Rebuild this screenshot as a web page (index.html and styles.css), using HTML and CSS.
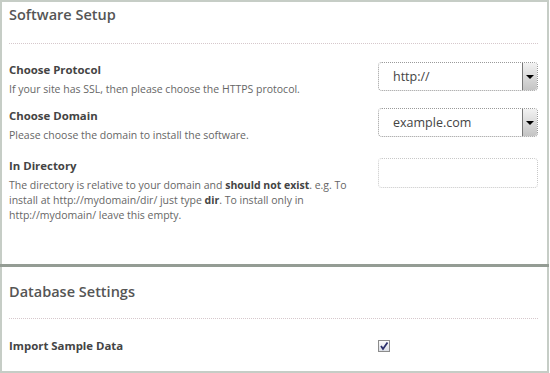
FILE: index.html
```html
<!DOCTYPE html>
<html lang="en">
<head>
  <meta charset="UTF-8" />
  <title>Software Setup</title>
  <link rel="stylesheet" href="styles.css">
</head>
<body>
  <div class="panel">
    <div class="section">
      <h2 class="title">Software Setup</h2>

      <div class="row">
        <div class="info">
          <div class="label">Choose Protocol</div>
          <div class="desc">If your site has SSL, then please choose the HTTPS protocol.</div>
        </div>
        <div class="control">
          <div class="select">
            <span class="value">http://</span>
            <span class="arrow"></span>
          </div>
        </div>
      </div>

      <div class="row">
        <div class="info">
          <div class="label">Choose Domain</div>
          <div class="desc">Please choose the domain to install the software.</div>
        </div>
        <div class="control">
          <div class="select">
            <span class="value">example.com</span>
            <span class="arrow"></span>
          </div>
        </div>
      </div>

      <div class="row row-dir">
        <div class="info">
          <div class="label">In Directory</div>
          <div class="desc">The directory is relative to your domain and <b>should not exist</b>. e.g. To install at http://mydomain/dir/ just type <b>dir</b>. To install only in http://mydomain/ leave this empty.</div>
        </div>
        <div class="control">
          <div class="textbox"></div>
        </div>
      </div>
    </div>

    <div class="divider"></div>

    <div class="section">
      <h2 class="title">Database Settings</h2>

      <div class="row row-last">
        <div class="info">
          <div class="label">Import Sample Data</div>
        </div>
        <div class="control">
          <span class="check">
            <svg width="10" height="10" viewBox="0 0 10 10">
              <path d="M2 5 L4 8 L8.5 1.5" fill="none" stroke="#2b2f6b" stroke-width="1.8"/>
            </svg>
          </span>
        </div>
      </div>
    </div>
  </div>
</body>
</html>
```

FILE: styles.css
```css
body {
  margin: 0;
  padding: 0;
  background: #fff;
  font-family: "Open Sans", "DejaVu Sans", sans-serif;
}

.panel {
  width: 545px;
  height: 369px;
  border: 2px solid #c6cdc6;
  background: #fff;
}

.section {
  padding: 0 9px 0 7px;
}

.title {
  margin: 0;
  padding: 2px 0 17px;
  font-size: 14.5px;
  font-weight: 600;
  line-height: 22px;
  color: #555;
  border-bottom: 1px dotted #d6c8cc;
}

.row {
  display: flex;
  align-items: flex-start;
  margin-top: 17px;
}

.row + .row {
  margin-top: 10px;
}

.row + .row-dir {
  margin-top: 14px;
}

.info {
  flex: 1;
  padding-right: 20px;
}

.label {
  font-size: 11.4px;
  font-weight: bold;
  line-height: 18px;
  color: #444;
}

.desc {
  margin-top: 3px;
  font-size: 10.5px;
  line-height: 15px;
  color: #666;
}

.desc b {
  color: #444;
}

.control {
  width: 160px;
  flex: none;
  padding-top: 1px;
}

.select {
  display: flex;
  align-items: stretch;
  height: 29px;
  box-sizing: border-box;
  border: 1px dotted #9a9a9a;
  border-radius: 4px;
}

.value {
  flex: 1;
  padding-left: 14px;
  font-size: 12.5px;
  line-height: 27px;
  color: #444;
}

.arrow {
  position: relative;
  width: 14px;
  border-left: 1px solid #777;
  border-radius: 0 3px 3px 0;
  background: linear-gradient(#f2f2f2, #c4c4c4);
}

.arrow::after {
  content: "";
  position: absolute;
  left: 3px;
  top: 12px;
  border-left: 4px solid transparent;
  border-right: 4px solid transparent;
  border-top: 4px solid #000;
}

.textbox {
  height: 30px;
  box-sizing: border-box;
  border: 1px dotted #c8c8c8;
  border-radius: 4px;
}

.divider {
  height: 3px;
  margin: 41px -2px 0;
  background: #949c94;
}

.divider + .section .title {
  padding-top: 14px;
  padding-bottom: 15px;
}

.row-last {
  margin-top: 18px;
}

.check {
  display: flex;
  align-items: center;
  justify-content: center;
  width: 12px;
  height: 12px;
  box-sizing: border-box;
  margin-top: 2px;
  border: 1px solid #8c8c8c;
  background: linear-gradient(#fafafa, #dcdfe6);
}
```
